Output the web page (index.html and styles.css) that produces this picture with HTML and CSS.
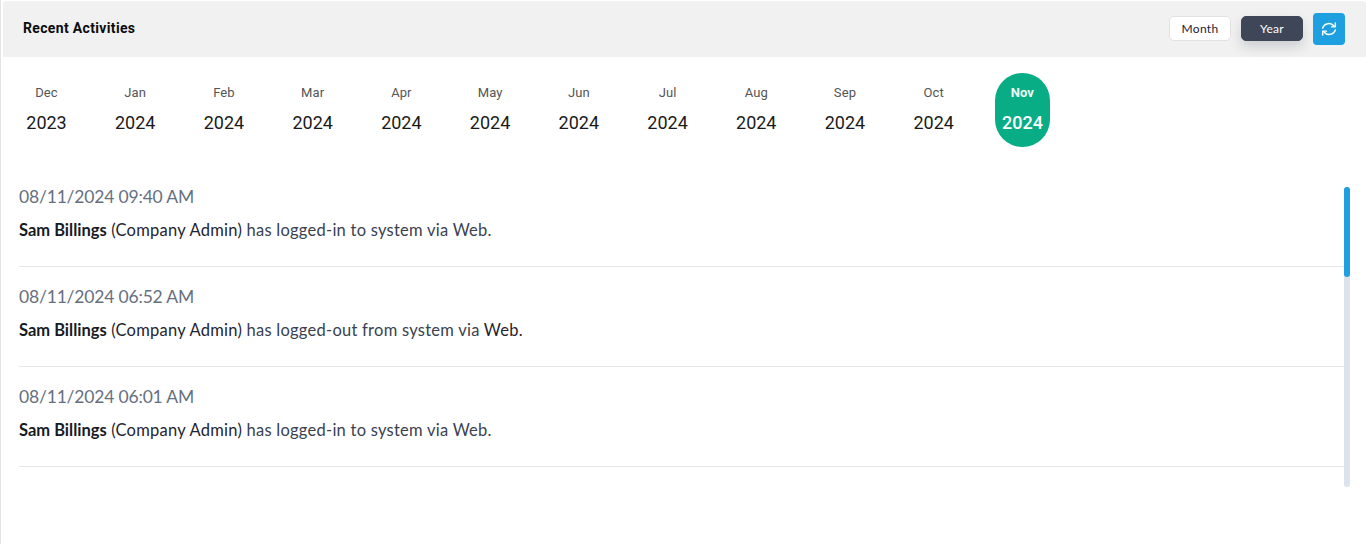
FILE: index.html
```html
<!DOCTYPE html>
<html lang="en">
<head>
<meta charset="utf-8">
<title>Recent Activities</title>
<link rel="stylesheet" href="styles.css">
</head>
<body>
<main class="card">
  <header class="card-head">
    <h2 class="title">Recent Activities</h2>
    <div class="actions">
      <button class="btn btn-light">Month</button>
      <button class="btn btn-dark">Year</button>
      <button class="btn-icon" aria-label="Refresh">
        <svg viewBox="0 0 24 24" width="16" height="16" fill="none" stroke="#fff" stroke-width="2.2" stroke-linecap="round" stroke-linejoin="round">
          <path d="M2.5 10.5A9.8 9.8 0 0 1 19.5 7.6"/>
          <polyline points="21.5 3 21.5 8.8 15.8 8.8"/>
          <path d="M21.5 13.5A9.8 9.8 0 0 1 4.5 16.4"/>
          <polyline points="2.5 21 2.5 15.2 8.2 15.2"/>
        </svg>
      </button>
    </div>
  </header>
  <nav class="months">
    <div class="month"><span class="m">Dec</span><span class="y">2023</span></div>
    <div class="month"><span class="m">Jan</span><span class="y">2024</span></div>
    <div class="month"><span class="m">Feb</span><span class="y">2024</span></div>
    <div class="month"><span class="m">Mar</span><span class="y">2024</span></div>
    <div class="month"><span class="m">Apr</span><span class="y">2024</span></div>
    <div class="month"><span class="m">May</span><span class="y">2024</span></div>
    <div class="month"><span class="m">Jun</span><span class="y">2024</span></div>
    <div class="month"><span class="m">Jul</span><span class="y">2024</span></div>
    <div class="month"><span class="m">Aug</span><span class="y">2024</span></div>
    <div class="month"><span class="m">Sep</span><span class="y">2024</span></div>
    <div class="month"><span class="m">Oct</span><span class="y">2024</span></div>
    <div class="month active"><span class="m">Nov</span><span class="y">2024</span></div>
  </nav>
  <section class="feed">
    <div class="list">
      <article class="row">
        <div class="date">08/11/2024 09:40 AM</div>
        <p class="text"><b>Sam Billings</b> <span class="role">(Company Admin)</span> has logged-in to system via Web.</p>
      </article>
      <article class="row">
        <div class="date">08/11/2024 06:52 AM</div>
        <p class="text"><b>Sam Billings</b> <span class="role">(Company Admin)</span> has logged-out from system via <span class="role">Web.</span></p>
      </article>
      <article class="row">
        <div class="date">08/11/2024 06:01 AM</div>
        <p class="text"><b>Sam Billings</b> <span class="role">(Company Admin)</span> has logged-in to system via Web.</p>
      </article>
    </div>
    <div class="track"><div class="thumb"></div></div>
  </section>
</main>
</body>
</html>
```
FILE: styles.css
```css
* { box-sizing: border-box; }
html, body { margin: 0; height: 100%; background: #fff; overflow: hidden; }
.card {
  height: 544px;
  border-left: 1px solid #e4e4e4;
  padding-top: 1px;
  font-family: Roboto, sans-serif;
}
.card-head {
  height: 56px;
  margin-left: 2px;
  background: #f1f1f1;
  border-radius: 3px 3px 0 0;
  display: flex;
  align-items: center;
  justify-content: space-between;
  padding: 0 21px 0 20px;
}
.title { margin: 0 0 2px; font-size: 14px; font-weight: 700; color: #0c0c0c; letter-spacing: 0.34px; }
.actions { display: flex; align-items: center; gap: 10px; }
.btn {
  width: 62px;
  height: 25px;
  margin-bottom: 1px;
  padding: 0 0 1px;
  border-radius: 5px;
  font-family: Lato, sans-serif;
  font-size: 12px;
  letter-spacing: 0.3px;
  cursor: pointer;
}
.btn-light { background: #fff; border: 1px solid #e2e2e2; color: #1c2434; }
.btn-dark { background: #3e4657; border: 1px solid #3e4657; color: #fff; box-shadow: 0 6px 12px rgba(62,70,87,.2); }
.btn-icon {
  width: 32px;
  height: 32px;
  padding: 0;
  border: 0;
  border-radius: 4px;
  background: #1e9fdf;
  display: flex;
  align-items: center;
  justify-content: center;
}
.months {
  display: flex;
  gap: 33.73px;
  margin-top: 16px;
  padding-left: 18px;
}
.month {
  width: 55px;
  height: 74px;
  border-radius: 28px;
  display: flex;
  flex-direction: column;
  align-items: center;
  color: #111;
}
.m { margin-top: 12px; font-size: 13px; line-height: 16px; color: #555; letter-spacing: 0.1px; }
.y { margin-top: 10px; font-size: 18px; line-height: 24px; color: #1a1a1a; }
.month.active { background: #09ad85; }
.month.active .m { color: #eefaf6; font-weight: 700; }
.month.active .y { color: #fff; font-weight: 500; }
.feed {
  display: flex;
  margin-top: 40px;
  padding-left: 18px;
}
.list { width: 1325px; }
.row {
  height: 100px;
  padding-top: 20px;
  border-bottom: 1px solid #e6e6e6;
}
.row:first-child { height: 80px; padding-top: 0; }
.date { font-family: Lato, sans-serif; font-size: 17.5px; line-height: 20px; letter-spacing: -0.18px; color: #667080; }
.text { margin: 12px 0 0; font-family: Lato, sans-serif; font-size: 16.5px; line-height: 22px; letter-spacing: 0.25px; color: #3a4150; }
.text b { font-weight: 700; letter-spacing: 0; color: #161b24; }
.role { color: #1f2530; }
.track {
  width: 6px;
  height: 300px;
  border-radius: 3px;
  background: #dde3ec;
}
.thumb { height: 90px; border-radius: 3px; background: #1e9fdf; }
```
